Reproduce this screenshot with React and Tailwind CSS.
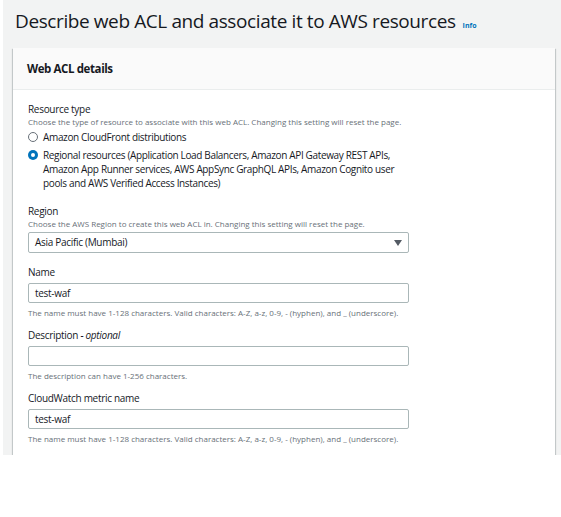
import React from 'react';

const font = { fontFamily: '"Open Sans", "Noto Sans", sans-serif' };

const Field = ({ label, optional, hint, help, children, className = '' }) => (
  <div className={className}>
    <div className="text-[10px] leading-[14px] tracking-[-0.3px] text-[#16191f]">
      {label}
      {optional && <span className="italic"> - optional</span>}
    </div>
    {hint && <div className="text-[8px] leading-[12px] text-[#687078]">{hint}</div>}
    {children}
    {help && <div className="mt-[4px] text-[8px] leading-[12px] text-[#687078]">{help}</div>}
  </div>
);

const TextInput = ({ value }) => (
  <div className="mt-[4px] w-[381px] h-[20px] border border-[#aab7b8] rounded-[2px] bg-white px-[6px] flex items-center text-[10px] tracking-[-0.3px] text-[#16191f]">
    {value}
  </div>
);

const Radio = ({ checked, children }) => (
  <label className="flex items-start gap-[5px] text-[10px] leading-[14px] tracking-[-0.35px] text-[#16191f]">
    {checked ? (
      <span className="mt-[2px] w-[10px] h-[10px] shrink-0 rounded-full bg-[#0073bb] flex items-center justify-center">
        <span className="w-[4px] h-[4px] rounded-full bg-white" />
      </span>
    ) : (
      <span className="mt-[2px] w-[10px] h-[10px] shrink-0 rounded-full border border-[#687078] bg-white" />
    )}
    <span>{children}</span>
  </label>
);

export default function App() {
  return (
    <div className="w-[561px] h-[517px] bg-white" style={font}>
      <div className="ml-[3px] h-[455px] bg-[#f2f3f3] overflow-hidden pl-[12px] pr-[6px]">
        <div className="flex items-baseline gap-[7px] pt-[8px] h-[48px]">
          <h1 className="text-[19px] leading-[26px] tracking-[-0.4px] text-[#16191f]">
            Describe web ACL and associate it to AWS resources
          </h1>
          <span className="text-[7px] font-bold text-[#0073bb]">Info</span>
        </div>

        <div className="-ml-[2px] bg-white shadow-[0_1px_1px_0_rgba(0,28,36,0.3),1px_1px_1px_0_rgba(0,28,36,0.15),-1px_1px_1px_0_rgba(0,28,36,0.15)]">
          <div className="h-[42px] bg-[#fafafa] border-b border-[#eaeded] px-[14px] flex items-center">
            <h2 className="text-[11.5px] font-bold tracking-[-0.4px] text-[#16191f]">Web ACL details</h2>
          </div>

          <div className="px-[15px] pt-[12px] pb-[20px]">
            <div>
              <div className="text-[10px] leading-[14px] tracking-[-0.3px] text-[#16191f]">Resource type</div>
              <div className="text-[8px] leading-[12px] text-[#687078]">
                Choose the type of resource to associate with this web ACL. Changing this setting will reset the page.
              </div>
              <div className="mt-[2px] flex flex-col gap-[4px] w-[381px]">
                <Radio>Amazon CloudFront distributions</Radio>
                <Radio checked>
                  Regional resources (Application Load Balancers, Amazon API Gateway REST APIs, Amazon App Runner
                  services, AWS AppSync GraphQL APIs, Amazon Cognito user pools and AWS Verified Access Instances)
                </Radio>
              </div>
            </div>

            <Field
              className="mt-[14px]"
              label="Region"
              hint="Choose the AWS Region to create this web ACL in. Changing this setting will reset the page."
            >
              <div className="mt-[2px] w-[381px] h-[21px] border border-[#aab7b8] rounded-[2px] bg-white px-[6px] flex items-center justify-between text-[10px] tracking-[-0.3px] text-[#16191f]">
                <span>Asia Pacific (Mumbai)</span>
                <svg width="8" height="6" viewBox="0 0 8 6">
                  <path d="M0 0h8L4 6z" fill="#545b64" />
                </svg>
              </div>
            </Field>

            <Field
              className="mt-[12px]"
              label="Name"
              help="The name must have 1-128 characters. Valid characters: A-Z, a-z, 0-9, - (hyphen), and _ (underscore)."
            >
              <TextInput value="test-waf" />
            </Field>

            <Field
              className="mt-[9px]"
              label="Description"
              optional
              help="The description can have 1-256 characters."
            >
              <TextInput value="" />
            </Field>

            <Field
              className="mt-[9px]"
              label="CloudWatch metric name"
              help="The name must have 1-128 characters. Valid characters: A-Z, a-z, 0-9, - (hyphen), and _ (underscore)."
            >
              <TextInput value="test-waf" />
            </Field>
          </div>
        </div>
      </div>
    </div>
  );
}
